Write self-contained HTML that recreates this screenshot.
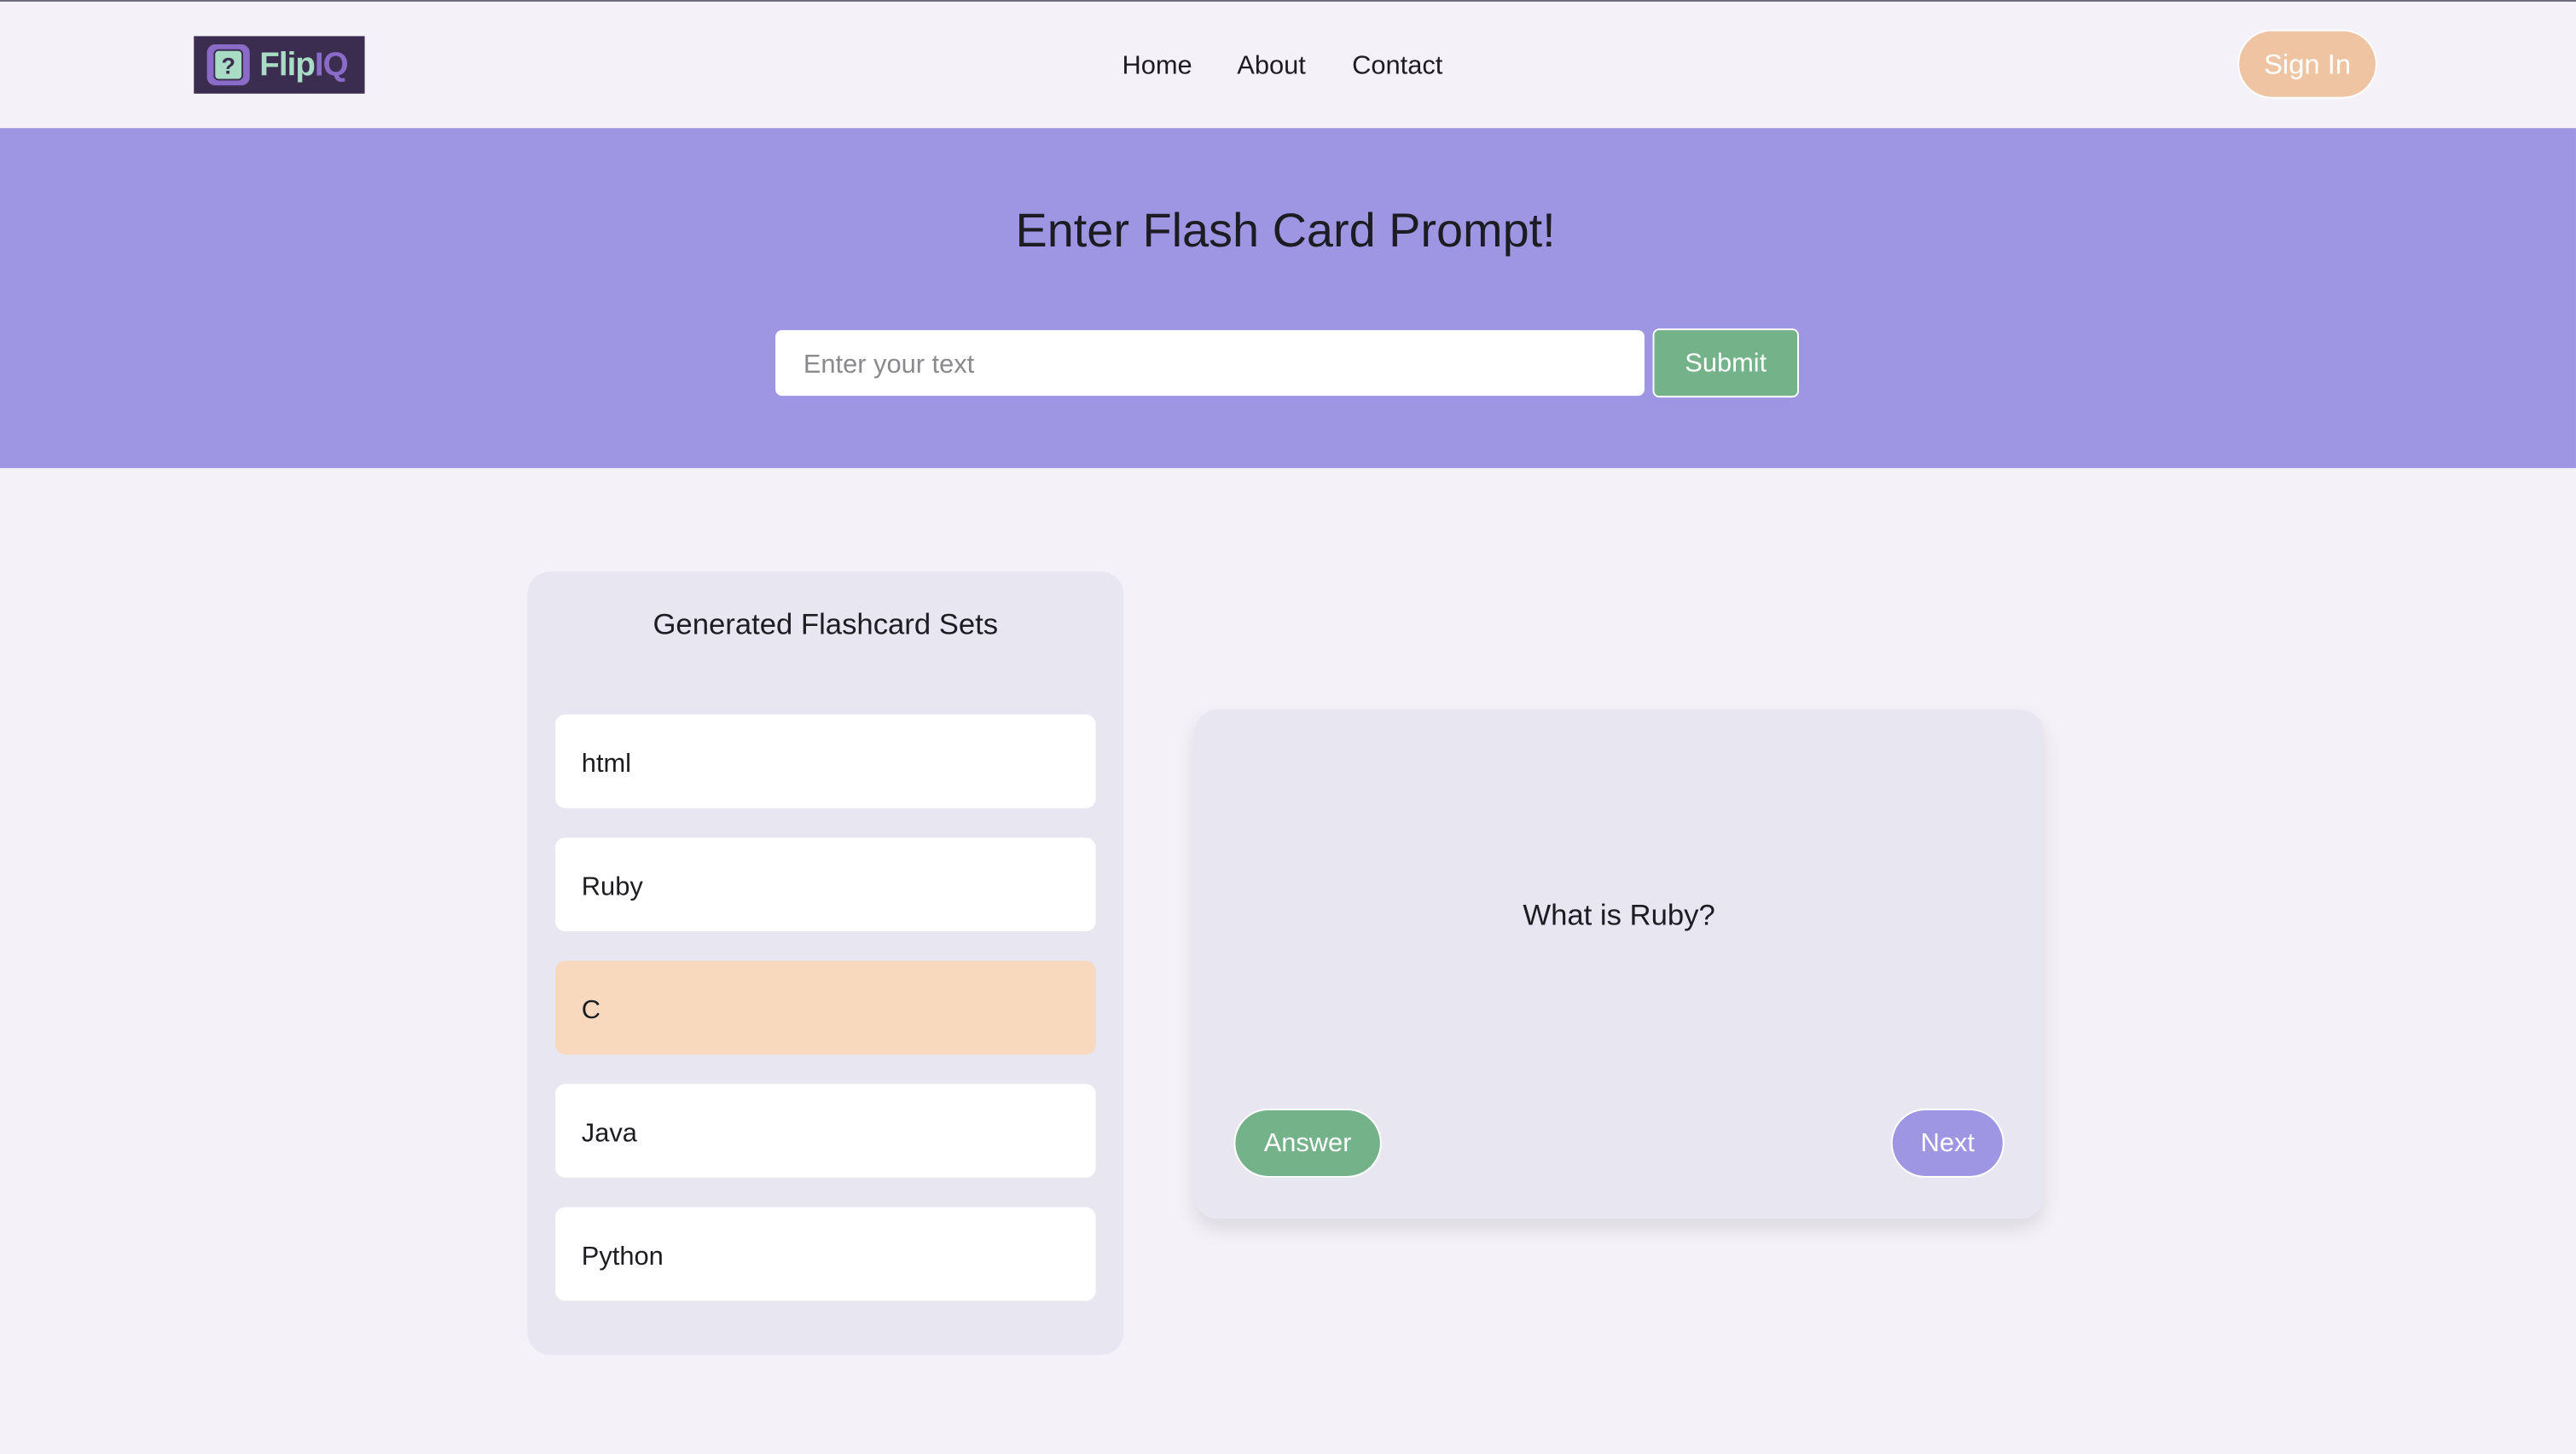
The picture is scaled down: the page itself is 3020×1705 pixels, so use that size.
<!DOCTYPE html>
<html><head><meta charset="utf-8"><style>
html,body{margin:0;padding:0;width:3020px;height:1704px;overflow:hidden;background:#f4f2f8;}
#w{position:absolute;left:0;top:0;width:1568px;height:885px;transform:scale(1.926);transform-origin:0 0;font-family:"Liberation Sans",sans-serif;color:#1c1c22;}
.a{position:absolute;}
.item{position:absolute;left:17px;width:329px;height:57px;background:#fff;border-radius:6px;font-size:16px;line-height:61px;text-indent:16px;}
.btn{position:absolute;border:1.5px solid #fff;border-radius:22px;color:#fff;font-size:16px;text-align:center;box-sizing:border-box;}
</style></head><body><div id="w">
<div class="a" style="left:0;top:0;width:1568px;height:1px;background:#6a6a7a"></div>
<div class="a" style="left:118px;top:22px;width:104px;height:35px;background:#3b2d50;">
  <div class="a" style="left:8px;top:5px;width:26px;height:25px;background:#8a6cc8;border-radius:5px;"></div>
  <div class="a" style="left:12px;top:8px;width:18px;height:19px;background:#a8dcc4;border:1px solid #3b2d50;border-radius:3px;box-sizing:border-box;font:bold 14px/18px 'Liberation Sans',sans-serif;color:#3b2d50;text-align:center;">?</div>
  <div class="a" style="left:40px;top:5px;font:bold 20px/27px 'Liberation Sans',sans-serif;color:#a8dcc4;letter-spacing:-0.5px">Flip<span style="color:#8a6cc8">IQ</span></div>
</div>
<div class="a" style="left:683px;top:32px;font-size:16px;">Home</div>
<div class="a" style="left:753px;top:32px;font-size:16px;">About</div>
<div class="a" style="left:823px;top:32px;font-size:16px;">Contact</div>
<div class="btn" style="left:1362px;top:18px;width:85px;height:42px;line-height:42px;background:#eec4a2;font-size:17px;">Sign In</div>
<div class="a" style="left:0;top:78px;width:1568px;height:207px;background:#9f96e3;"></div>
<div class="a" style="left:0;top:125px;width:1565px;text-align:center;font-size:29px;">Enter Flash Card Prompt!</div>
<div class="a" style="left:472px;top:201px;width:529px;height:40px;background:#fff;border-radius:4px;font-size:16px;line-height:43px;text-indent:17px;color:#8a8a8e;">Enter your text</div>
<div class="a" style="left:1006px;top:200px;width:89px;height:42px;background:#74b28a;border:1.5px solid #fff;border-radius:4px;box-sizing:border-box;color:#fff;font-size:16px;line-height:42px;text-align:center;">Submit</div>
<div class="a" style="left:321px;top:348px;width:363px;height:477px;background:#e8e6f0;border-radius:14px;">
  <div class="a" style="left:0;top:22px;width:363px;text-align:center;font-size:18px;">Generated Flashcard Sets</div>
  <div class="item" style="top:87px">html</div>
  <div class="item" style="top:162px">Ruby</div>
  <div class="item" style="top:237px;background:#f8d9bd">C</div>
  <div class="item" style="top:312px">Java</div>
  <div class="item" style="top:387px">Python</div>
</div>
<div class="a" style="left:727px;top:432px;width:517px;height:310px;background:#e8e6f0;border-radius:14px;box-shadow:0 6px 12px rgba(0,0,0,0.1);">
  <div class="a" style="left:0;top:115px;width:517px;text-align:center;font-size:18px;">What is Ruby?</div>
  <div class="btn" style="left:24px;top:243px;width:90px;height:42px;line-height:42px;background:#74b28a;">Answer</div>
  <div class="btn" style="left:424px;top:243px;width:69px;height:42px;line-height:42px;background:#9f96e3;">Next</div>
</div>
</div></body></html>
